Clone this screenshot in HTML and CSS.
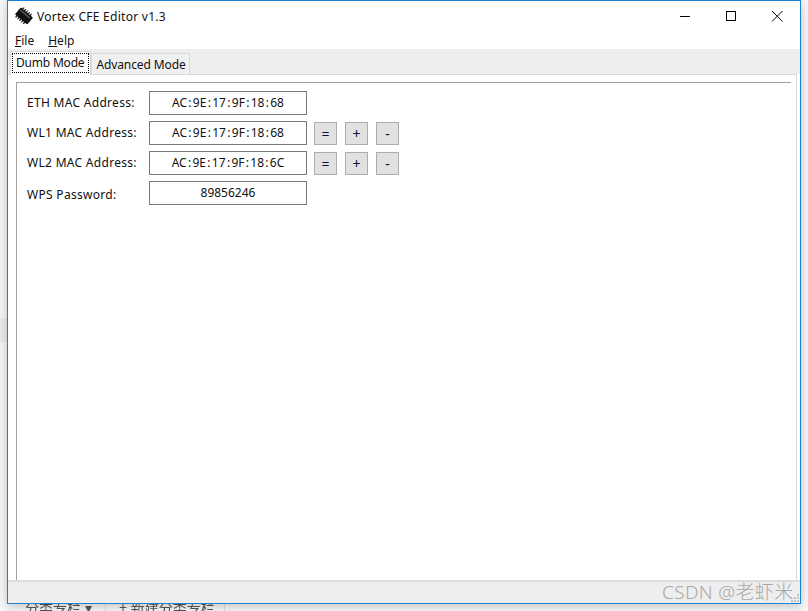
FILE: index.html
```html
<!DOCTYPE html>
<html lang="en">
<head>
<meta charset="utf-8">
<title>Vortex CFE Editor v1.3</title>
<link rel="stylesheet" href="styles.css">
</head>
<body>
<div class="behind">
  <span class="behind-a">分类专栏 ▾</span>
  <span class="behind-b">+ 新建分类专栏</span>
</div>
<div class="band"></div>
<main class="window">
  <header class="titlebar">
    <svg class="app-icon" width="18" height="18" viewBox="0 0 18 18">
      <g transform="rotate(40 9 9)">
        <path d="M3.500 2.500v3M6 2.500v3M8.500 2.500v3M11 2.500v3M13.500 2.500v3M3.500 12.500v3M6 12.500v3M8.500 12.500v3M11 12.500v3M13.500 12.500v3" stroke="#1a1a1a" stroke-width="1.300" fill="none"/>
        <path d="M3.500 2v1.200M8.500 2v1.200M13.500 2v1.200M6 14.800V16M11 14.800V16" stroke="#d8c000" stroke-width="1.300" fill="none"/>
        <rect x="1" y="4.500" width="16" height="9" rx="1" fill="#111"/>
        <rect x="2.500" y="6" width="12" height="1.500" fill="#555"/>
      </g>
    </svg>
    <span class="title">Vortex CFE Editor v1.3</span>
    <div class="controls">
      <svg class="ctl" width="46" height="29" viewBox="0 0 46 29"><path d="M18 15.500h10" stroke="#000" fill="none"/></svg>
      <svg class="ctl" width="46" height="29" viewBox="0 0 46 29"><rect x="18.500" y="10.500" width="9" height="9" stroke="#000" fill="none"/></svg>
      <svg class="ctl" width="46" height="29" viewBox="0 0 46 29"><path d="M18 10l10.500 10.500M28.500 10L18 20.500" stroke="#000" fill="none"/></svg>
    </div>
  </header>
  <nav class="menubar">
    <span class="menu"><u>F</u>ile</span>
    <span class="menu"><u>H</u>elp</span>
  </nav>
  <div class="tabstrip">
    <div class="tab tab-active"><span class="focus">Dumb Mode</span></div>
    <div class="tab">Advanced Mode</div>
  </div>
  <section class="page">
    <div class="group">
      <div class="row">
        <label class="label">ETH MAC Address:</label>
        <div class="field">AC<i class="sep">:</i>9E<i class="sep">:</i>17<i class="sep">:</i>9F<i class="sep">:</i>18<i class="sep">:</i>68</div>
      </div>
      <div class="row">
        <label class="label">WL1 MAC Address:</label>
        <div class="field">AC<i class="sep">:</i>9E<i class="sep">:</i>17<i class="sep">:</i>9F<i class="sep">:</i>18<i class="sep">:</i>68</div>
        <div class="btns"><button class="btn">=</button><button class="btn">+</button><button class="btn">-</button></div>
      </div>
      <div class="row">
        <label class="label">WL2 MAC Address:</label>
        <div class="field">AC<i class="sep">:</i>9E<i class="sep">:</i>17<i class="sep">:</i>9F<i class="sep">:</i>18<i class="sep">:</i>6C</div>
        <div class="btns"><button class="btn">=</button><button class="btn">+</button><button class="btn">-</button></div>
      </div>
      <div class="row">
        <label class="label label-low">WPS Password:</label>
        <div class="field">89856246</div>
      </div>
    </div>
  </section>
  <footer class="statusbar">
    <svg class="grip" width="10" height="10" viewBox="0 0 10 10"><path d="M7 1h2v2H7zM4 4h2v2H4zM7 4h2v2H7zM1 7h2v2H1zM4 7h2v2H4zM7 7h2v2H7z" fill="#c4c4c4"/></svg>
  </footer>
</main>
<div class="watermark">CSDN @老虾米</div>
</body>
</html>
```
FILE: styles.css
```css
* { box-sizing: border-box; }
html, body { margin: 0; padding: 0; }
body {
  width: 808px;
  height: 611px;
  overflow: hidden;
  position: relative;
  background: #f7f7f7;
  font-family: "Noto Sans", "Noto Sans CJK SC", sans-serif;
  font-size: 12px;
  color: #111;
}
.behind {
  position: absolute;
  left: 0;
  right: 0;
  top: 599px;
  height: 12px;
  font-size: 14px;
  line-height: 17px;
  color: #555;
  filter: blur(.4px);
  overflow: hidden;
}
.behind-a { position: absolute; left: 25px; top: 0; }
.behind-b {
  position: absolute;
  left: 105px;
  top: 0;
  width: 120px;
  height: 12px;
  padding-left: 13px;
  border-left: 1px solid #ddd;
  border-right: 1px solid #ddd;
}
.band {
  position: absolute;
  left: 0;
  top: 318px;
  width: 7px;
  height: 24px;
  background: #ececec;
}
.window {
  position: absolute;
  left: 7px;
  top: 0;
  width: 794px;
  height: 604px;
  display: flex;
  flex-direction: column;
  background: #fff;
  border: 1px solid #1a82d4;
  box-shadow: 0 2px 10px rgba(0,0,0,.22);
}
.titlebar {
  flex: 0 0 29px;
  display: flex;
  align-items: center;
  padding-left: 7px;
  background: #fff;
}
.app-icon { flex: none; margin-top: 0; }
.title { margin-left: 4px; padding-top: 1px; font-size: 12px; letter-spacing: .27px; color: #111; }
.controls { margin-left: auto; display: flex; }
.ctl { display: block; }
.menubar {
  flex: 0 0 19px;
  display: flex;
  align-items: center;
  gap: 14px;
  padding: 2px 0 0 7px;
  background: #fff;
}
.tabstrip {
  flex: 0 0 25px;
  display: flex;
  align-items: flex-end;
  padding-left: 2px;
  background: #eeeeee;
  position: relative;
}
.tab {
  height: 21px;
  padding: 0 3px 0 4px;
  display: flex;
  align-items: center;
  background: #f0f0f0;
  border: 1px solid #d9d9d9;
  border-bottom: 0;
  letter-spacing: -.1px;
}
.tab-active {
  height: 24px;
  background: #fff;
  margin-bottom: -1px;
  position: relative;
  z-index: 1;
  padding: 1px;
  align-items: stretch;
  letter-spacing: -.2px;
}
.focus {
  display: flex;
  align-items: center;
  padding: 0 4px 1px 3px;
  border: 1px dotted #000;
  height: 20px;
}
.page {
  flex: 1;
  padding: 7px 5px 0 8px;
  background: #fff;
  border: 1px solid #d9d9d9;
  border-left: 0;
  border-bottom: 0;
  margin-right: 3px;
  display: flex;
}
.group {
  flex: 1;
  border: solid #a0a0a0;
  border-width: 1px 0 0 1px;
  padding: 8px 0 0 10px;
  display: flex;
  flex-direction: column;
  gap: 6px;
}
.row { display: flex; align-items: center; height: 24px; }
.label { width: 122px; flex: none; letter-spacing: .3px; padding-bottom: 2px; }
.label-low { padding: 2px 0 0; }
.field {
  width: 158px;
  height: 24px;
  flex: none;
  display: flex;
  align-items: center;
  justify-content: center;
  padding-bottom: 2px;
  border: 1px solid #7a7a7a;
  background: #fff;
}
.sep { font-style: normal; margin: 0 1.300px; }
.btns { display: flex; gap: 8px; margin-left: 7px; padding-top: 1px; }
.btn {
  width: 23px;
  height: 23px;
  padding: 0;
  border: 1px solid #adadad;
  background: #e1e1e1;
  color: #111133;
  font: inherit;
  font-size: 14px;
  line-height: 20px;
}
.statusbar {
  flex: 0 0 23px;
  background: #eeeeee;
  border-top: 2px solid #dcdcdc;
  display: flex;
  align-items: flex-end;
  justify-content: flex-end;
}
.grip { display: block; }
.watermark {
  position: absolute;
  left: 662px;
  top: 579px;
  font-size: 19px;
  font-weight: 300;
  letter-spacing: .35px;
  line-height: 26px;
  color: #a8a8a8;
  white-space: nowrap;
}
```
